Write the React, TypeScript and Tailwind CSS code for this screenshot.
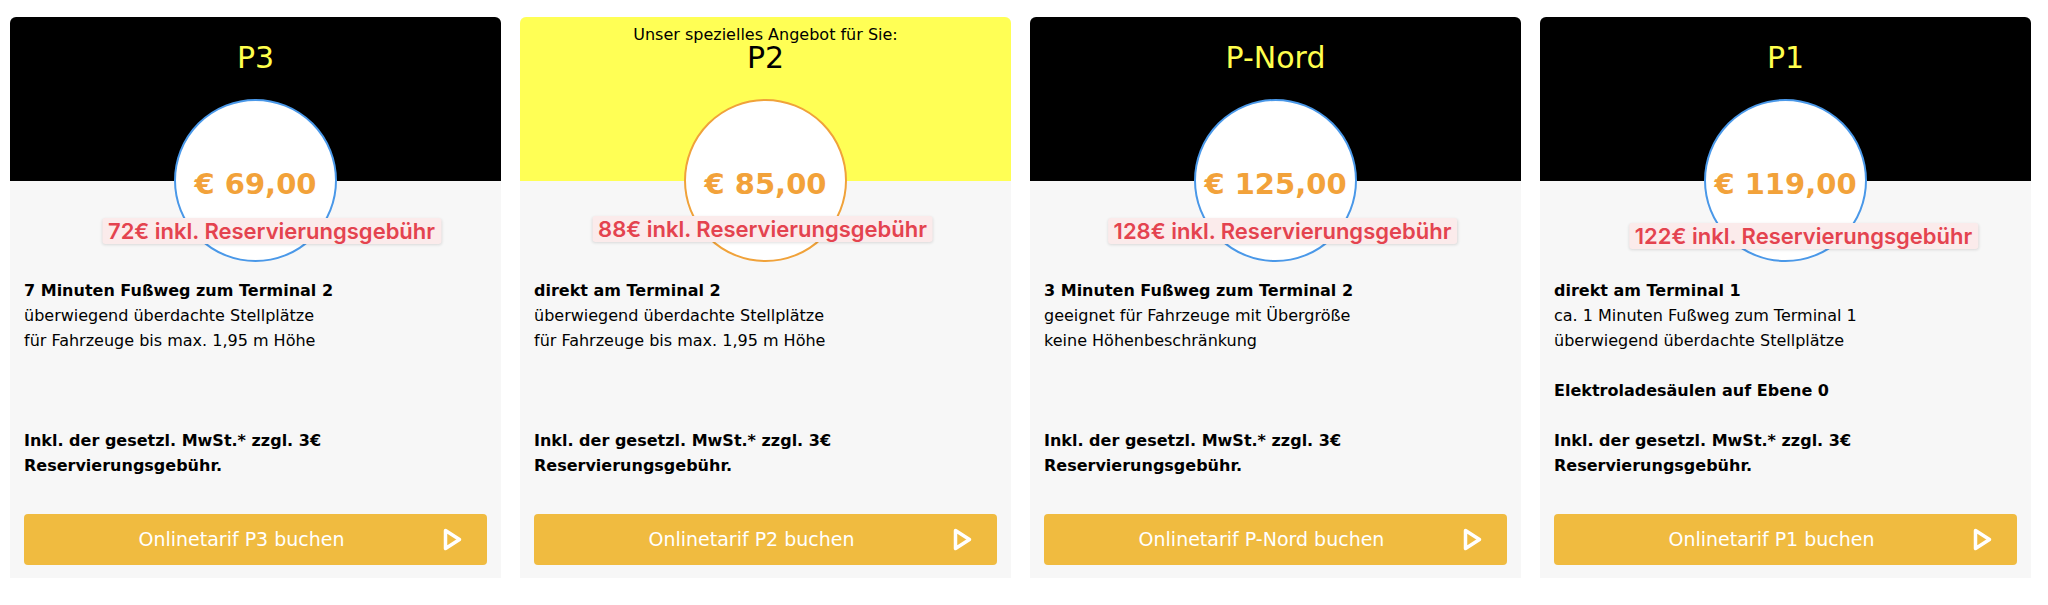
import React from "react";

type Line = { t: string; b?: boolean };
type Card = {
  title: string;
  price: string;
  fee: string;
  special: boolean;
  badgeShift: string;
  badgeTop: string;
  lines: Line[];
  btn: string;
};

const cards: Card[] = [
  {
    title: "P3",
    price: "€ 69,00",
    fee: "72€ inkl. Reservierungsgebühr",
    special: false,
    badgeShift: "ml-[16px]",
    badgeTop: "top-[119px]",
    lines: [
      { t: "7 Minuten Fußweg zum Terminal 2", b: true },
      { t: "überwiegend überdachte Stellplätze" },
      { t: "für Fahrzeuge bis max. 1,95 m Höhe" },
    ],
    btn: "Onlinetarif P3 buchen",
  },
  {
    title: "P2",
    price: "€ 85,00",
    fee: "88€ inkl. Reservierungsgebühr",
    special: true,
    badgeShift: "-ml-[3px]",
    badgeTop: "top-[117px]",
    lines: [
      { t: "direkt am Terminal 2", b: true },
      { t: "überwiegend überdachte Stellplätze" },
      { t: "für Fahrzeuge bis max. 1,95 m Höhe" },
    ],
    btn: "Onlinetarif P2 buchen",
  },
  {
    title: "P-Nord",
    price: "€ 125,00",
    fee: "128€ inkl. Reservierungsgebühr",
    special: false,
    badgeShift: "ml-[7px]",
    badgeTop: "top-[119px]",
    lines: [
      { t: "3 Minuten Fußweg zum Terminal 2", b: true },
      { t: "geeignet für Fahrzeuge mit Übergröße" },
      { t: "keine Höhenbeschränkung" },
    ],
    btn: "Onlinetarif P-Nord buchen",
  },
  {
    title: "P1",
    price: "€ 119,00",
    fee: "122€ inkl. Reservierungsgebühr",
    special: false,
    badgeShift: "ml-[18px]",
    badgeTop: "top-[124px]",
    lines: [
      { t: "direkt am Terminal 1", b: true },
      { t: "ca. 1 Minuten Fußweg zum Terminal 1" },
      { t: "überwiegend überdachte Stellplätze" },
      { t: "" },
      { t: "Elektroladesäulen auf Ebene 0", b: true },
    ],
    btn: "Onlinetarif P1 buchen",
  },
];

function PlayIcon() {
  return (
    <svg width="19" height="23" viewBox="0 0 19 23" fill="none">
      <polygon
        points="2.5,2.5 16.5,11.5 2.5,20.5"
        stroke="white"
        strokeWidth="3.5"
        strokeLinejoin="round"
        fill="none"
      />
    </svg>
  );
}

function PriceCard({ c }: { c: Card }) {
  return (
    <div className="w-[491px] shrink-0 flex flex-col rounded-t-[6px] overflow-hidden bg-[#f7f7f7]">
      <div
        className={`h-[164px] flex flex-col items-center pt-[9px] ${
          c.special ? "bg-[#ffff55] text-black" : "bg-black text-[#ffff4d]"
        }`}
      >
        <div className="h-[15px] text-[16px] leading-[18px] text-black">
          {c.special ? "Unser spezielles Angebot für Sie:" : ""}
        </div>
        <div className="text-[30px] leading-[34px]">{c.title}</div>
      </div>
      <div className="flex flex-col">
        <div className="relative self-center -mt-[82px] w-[163px] h-[163px]">
          <div
            className={`w-[163px] h-[163px] rounded-full bg-white border-2 flex items-center justify-center pt-[7px] ${
              c.special ? "border-[#f0a23a]" : "border-[#4a98e8]"
            }`}
          >
            <span className="text-[29px] font-bold text-[#f2a23a] whitespace-nowrap leading-none">
              {c.price}
            </span>
          </div>
          <div
            className={`absolute left-1/2 -translate-x-1/2 ${c.badgeTop} ${c.badgeShift} whitespace-nowrap bg-[#fbebeb] text-[#e4434f] px-[6px] h-[26px] leading-[26px] rounded-[3px] shadow-[0_1px_3px_rgba(0,0,0,0.12)] text-[22px] font-semibold [font-family:Inter,sans-serif]`}
          >
            {c.fee}
          </div>
        </div>
        <div className="mt-[16px] h-[150px] px-[14px] text-[16px] leading-[25px] text-black">
          {c.lines.map((l, i) => (
            <div key={i} className={`h-[25px] ${l.b ? "font-bold" : ""}`}>
              {l.t}
            </div>
          ))}
        </div>
        <div className="h-[50px] px-[14px] text-[16px] leading-[25px] font-bold text-black">
          Inkl. der gesetzl. MwSt.* zzgl. 3€
          <br />
          Reservierungsgebühr.
        </div>
        <div className="mt-[36px] mx-[14px] mb-[13px] h-[51px] rounded-[4px] bg-[#f0bb40] relative flex items-center justify-center pr-[28px]">
          <span className="text-white text-[19px]">{c.btn}</span>
          <div className="absolute right-[25px] top-[14px]">
            <PlayIcon />
          </div>
        </div>
      </div>
    </div>
  );
}

export default function App() {
  return (
    <div className="w-[2048px] h-[605px] bg-white pt-[17px] pl-[10px] flex gap-[19px] items-start [font-family:'DejaVu_Sans',Verdana,sans-serif]">
      {cards.map((c) => (
        <PriceCard key={c.title} c={c} />
      ))}
    </div>
  );
}
